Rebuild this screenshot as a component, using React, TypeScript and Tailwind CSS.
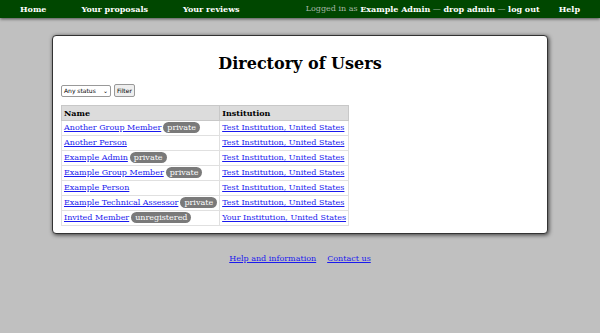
const USERS = [
  { name: 'Another Group Member', badge: 'private', inst: 'Test Institution, United States' },
  { name: 'Another Person', inst: 'Test Institution, United States' },
  { name: 'Example Admin', badge: 'private', inst: 'Test Institution, United States' },
  { name: 'Example Group Member', badge: 'private', inst: 'Test Institution, United States' },
  { name: 'Example Person', inst: 'Test Institution, United States' },
  { name: 'Example Technical Assessor', badge: 'private', inst: 'Test Institution, United States' },
  { name: 'Invited Member', badge: 'unregistered', inst: 'Your Institution, United States' },
]

function Badge({ label }: { label: string }) {
  return <span className="ml-[2px] inline-block rounded-full bg-[#7a7a7a] px-[4px] leading-[11px] text-white">{label}</span>
}

export default function App() {
  return (
    <div className="min-h-[333px] bg-[#c0c0c0] text-[8px] text-black" style={{ fontFamily: '"DejaVu Serif", serif' }}>
      <nav className="flex h-[18px] items-center bg-[#004700] px-[20px] font-bold text-white shadow-[0_1px_3px_rgba(0,0,0,0.6)]">
        <a className="mr-[35px]">Home</a>
        <a className="mr-[35px]">Your proposals</a>
        <a>Your reviews</a>
        <div className="ml-auto flex items-center">
          <span className="font-normal text-[#a8b8a8]">Logged in as&nbsp;</span>
          <span>Example Admin</span>
          <span className="font-normal text-[#a8b8a8]">&nbsp;—&nbsp;</span>
          <span>drop admin</span>
          <span className="font-normal text-[#a8b8a8]">&nbsp;—&nbsp;</span>
          <span>log out</span>
          <span className="ml-[19px]">Help</span>
        </div>
      </nav>

      <main className="mx-[52px] mt-[17px] rounded-[4px] border border-[#333] bg-white px-[8px] pb-[7px] pt-[16px] shadow-[1px_1px_4px_rgba(0,0,0,0.7)]">
        <h1 className="text-center text-[16px] font-bold leading-[24px]">Directory of Users</h1>
        <form className="mt-[8px] flex items-center gap-[3px]" style={{ fontFamily: '"DejaVu Sans", sans-serif' }}>
          <div className="flex h-[12px] w-[50px] items-center justify-between rounded-[2px] border border-[#999] bg-white px-[2px] text-[6px]">
            <span>Any status</span>
            <span className="text-[6px] leading-[6px]">⌄</span>
          </div>
          <button type="button" className="h-[13px] rounded-[2px] border border-[#999] bg-[#eee] px-[2px] text-[6px] leading-[11px]">Filter</button>
        </form>
        <table className="mt-[8px] border-collapse whitespace-nowrap">
          <thead>
            <tr className="bg-[#dcdcdc]">
              <th className="w-[155px] border border-[#c8c8c8] px-[2px] py-0 text-left leading-[14px]">Name</th>
              <th className="border border-[#c8c8c8] px-[2px] py-0 text-left leading-[14px]">Institution</th>
            </tr>
          </thead>
          <tbody>
            {USERS.map(u => (
              <tr key={u.name}>
                <td className="border border-[#e0e0e0] px-[2px] leading-[14px]">
                  <a className="text-[#1a1aee] underline">{u.name}</a>
                  {u.badge && <Badge label={u.badge} />}
                </td>
                <td className="border border-[#e0e0e0] px-[2px] leading-[14px]">
                  <a className="text-[#1a1aee] underline">{u.inst}</a>
                </td>
              </tr>
            ))}
          </tbody>
        </table>
      </main>

      <footer className="mt-[19px] flex justify-center gap-[11px]">
        <a className="text-[#1a1aee] underline">Help and information</a>
        <a className="text-[#1a1aee] underline">Contact us</a>
      </footer>
    </div>
  )
}
